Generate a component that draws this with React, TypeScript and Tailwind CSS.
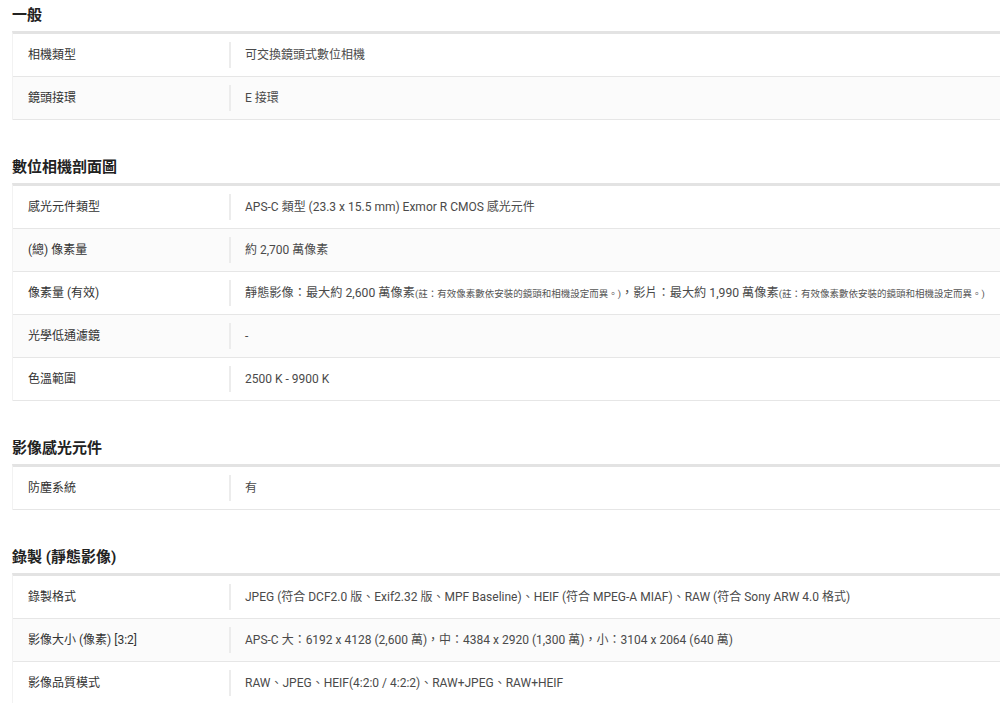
import React from "react";

type Row = { label: string; value: React.ReactNode };
type Section = { title: string; rows: Row[] };

const Note = ({ children }: { children: React.ReactNode }) => (
  <span className="text-[9.5px] text-[#555]">{children}</span>
);

const sections: Section[] = [
  {
    title: "一般",
    rows: [
      { label: "相機類型", value: "可交換鏡頭式數位相機" },
      { label: "鏡頭接環", value: "E 接環" },
    ],
  },
  {
    title: "數位相機剖面圖",
    rows: [
      { label: "感光元件類型", value: "APS-C 類型 (23.3 x 15.5 mm) Exmor R CMOS 感光元件" },
      { label: "(總) 像素量", value: "約 2,700 萬像素" },
      {
        label: "像素量 (有效)",
        value: (
          <span className="text-[12.2px]">
            靜態影像：最大約 2,600 萬像素<Note>(註：有效像素數依安裝的鏡頭和相機設定而異。)</Note>，影片：最大約 1,990 萬像素<Note>(註：有效像素數依安裝的鏡頭和相機設定而異。)</Note>
          </span>
        ),
      },
      { label: "光學低通濾鏡", value: "-" },
      { label: "色溫範圍", value: "2500 K - 9900 K" },
    ],
  },
  {
    title: "影像感光元件",
    rows: [{ label: "防塵系統", value: "有" }],
  },
  {
    title: "錄製 (靜態影像)",
    rows: [
      {
        label: "錄製格式",
        value: "JPEG (符合 DCF2.0 版、Exif2.32 版、MPF Baseline)、HEIF (符合 MPEG-A MIAF)、RAW (符合 Sony ARW 4.0 格式)",
      },
      {
        label: "影像大小 (像素) [3:2]",
        value: "APS-C 大：6192 x 4128 (2,600 萬)，中：4384 x 2920 (1,300 萬)，小：3104 x 2064 (640 萬)",
      },
      { label: "影像品質模式", value: "RAW、JPEG、HEIF(4:2:0 / 4:2:2)、RAW+JPEG、RAW+HEIF" },
    ],
  },
];

export default function App() {
  return (
    <div
      className="w-[1000px] h-[703px] overflow-hidden bg-white pt-[3px]"
      style={{ fontFamily: "Roboto, 'Noto Sans CJK TC', sans-serif" }}
    >
      {sections.map((s, i) => (
        <section key={i} className="mb-[35px]">
          <h2 className="pl-[12px] h-[24px] leading-[24px] text-[15px] font-bold text-[#222] mb-[4px]">
            {s.title}
          </h2>
          <div className="ml-[12px] w-[1000px] border-t-[3px] border-[#e3e3e3] border-l border-l-[#f2f2f2]">
            {s.rows.map((r, j) => (
              <div
                key={j}
                className={`flex items-center h-[43px] border-b border-[#e6e6e6] ${j % 2 === 1 ? "bg-[#fbfbfb]" : "bg-white"}`}
              >
                <div className="w-[216px] shrink-0 pl-[15px] text-[12px] text-[#333] whitespace-nowrap">
                  {r.label}
                </div>
                <div className="w-[2px] h-[26px] bg-[#ececec] shrink-0" />
                <div className="pl-[14px] text-[12px] text-[#4a4a4a] whitespace-nowrap">{r.value}</div>
              </div>
            ))}
          </div>
        </section>
      ))}
    </div>
  );
}
